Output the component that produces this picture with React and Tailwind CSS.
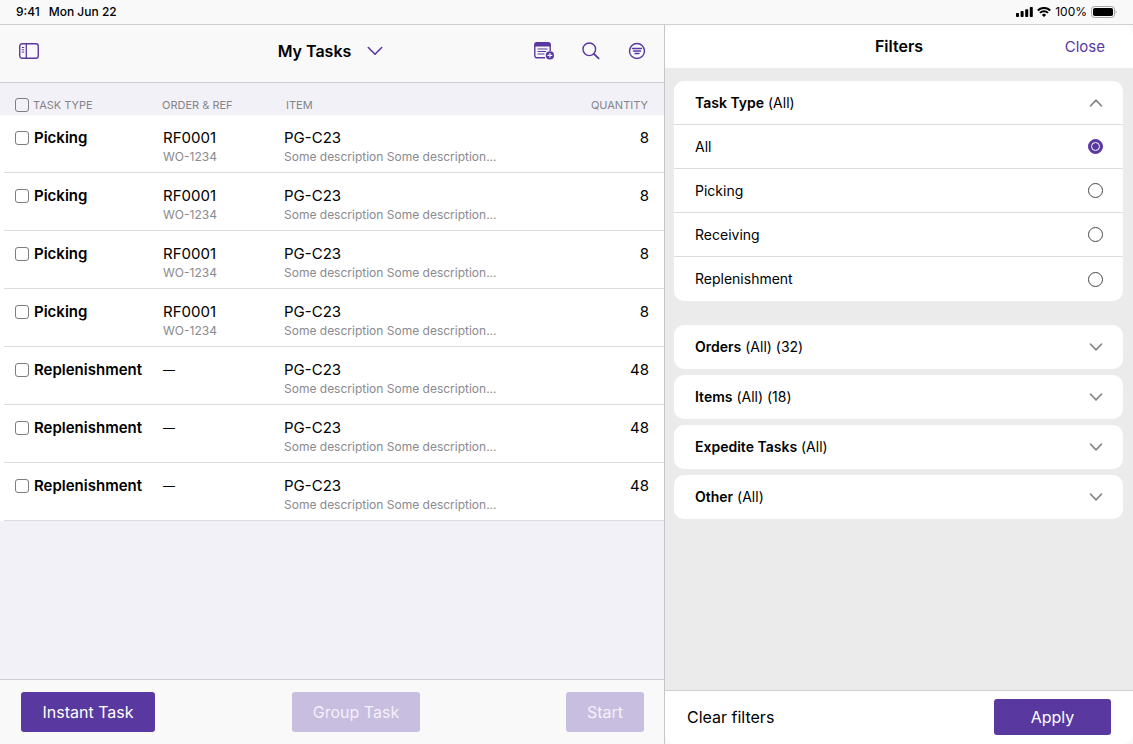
import { useState } from "react";

const initialTasks = [
  { id: 1, type: "Picking", order: "RF0001", ref: "WO-1234", quantity: 8 },
  { id: 2, type: "Picking", order: "RF0001", ref: "WO-1234", quantity: 8 },
  { id: 3, type: "Picking", order: "RF0001", ref: "WO-1234", quantity: 8 },
  { id: 4, type: "Picking", order: "RF0001", ref: "WO-1234", quantity: 8 },
  { id: 5, type: "Replenishment", quantity: 48 },
  { id: 6, type: "Replenishment", quantity: 48 },
  { id: 7, type: "Replenishment", quantity: 48 },
];

const taskTypes = ["All", "Picking", "Receiving", "Replenishment"];

const filterGroups = [
  { name: "Orders", detail: "(All) (32)" },
  { name: "Items", detail: "(All) (18)" },
  { name: "Expedite Tasks", detail: "(All)" },
  { name: "Other", detail: "(All)" },
];

function SidebarIcon() {
  return (
    <svg width="20" height="16" viewBox="0 0 20 16" fill="none" stroke="currentColor" aria-hidden="true">
      <rect x="0.75" y="0.75" width="18.5" height="14.5" rx="2.2" strokeWidth="1.4" />
      <path d="M7.3 1v14" strokeWidth="1.3" />
      <path d="M2.8 4.5h2.4M2.8 6.8h2.4M2.8 9.1h2.4" strokeWidth="1" />
    </svg>
  );
}

function AddTaskIcon() {
  return (
    <svg width="20" height="18" viewBox="0 0 20 18" fill="none" stroke="currentColor" aria-hidden="true">
      <path d="M11 15.8H3A2.2 2.2 0 0 1 .8 13.6V3A2.2 2.2 0 0 1 3 .8h11A2.2 2.2 0 0 1 16.2 3v6" strokeWidth="1.4" />
      <path d="M.8 4V3A2.2 2.2 0 0 1 3 .8h11A2.2 2.2 0 0 1 16.2 3v1z" fill="currentColor" />
      <path d="M3.5 7h10M3.5 9.5h8.5M3.5 12h7" strokeWidth="1.2" />
      <circle cx="15.9" cy="13.4" r="4.1" fill="currentColor" stroke="none" />
      <path d="M15.9 11v4.8M13.5 13.4h4.800" stroke="#f9f9f9" strokeWidth="1.1" />
    </svg>
  );
}

function SearchIcon() {
  return (
    <svg width="18" height="18" viewBox="0 0 18 18" fill="none" stroke="currentColor" aria-hidden="true">
      <circle cx="7.3" cy="7.3" r="6.3" strokeWidth="1.4" />
      <path d="M11.9 11.9l4.700 4.500" strokeWidth="1.9" strokeLinecap="round" />
    </svg>
  );
}

function FilterIcon() {
  return (
    <svg width="18" height="18" viewBox="0 0 18 18" fill="none" stroke="currentColor" aria-hidden="true">
      <circle cx="9" cy="9" r="7.5" strokeWidth="1.4" />
      <path d="M4.500 6.500h9M5.500 9h7M7 11.500h4" strokeWidth="1.4" strokeLinecap="round" />
    </svg>
  );
}

function Chevron({ up = false }) {
  return (
    <svg width="14" height="8" viewBox="0 0 14 8" fill="none" stroke="#8a8a8e" strokeWidth="1.7" strokeLinecap="round" strokeLinejoin="round" aria-hidden="true">
      <path d={up ? "M1.500 6.800L7 1.200l5.500 5.600" : "M1.500 1.200L7 6.800l5.500-5.600"} />
    </svg>
  );
}

function StatusBar() {
  return (
    <header className="flex h-[25px] shrink-0 items-center justify-between border-b border-[#cfcfd3] px-4 text-xs font-medium">
      <div className="flex gap-[9px]">
        <span>9:41</span>
        <span>Mon Jun 22</span>
      </div>
      <div className="flex items-center gap-1">
        <svg width="17" height="10" viewBox="0 0 17 10" aria-hidden="true">
          <rect x="0" y="6" width="3" height="4" rx="0.8" />
          <rect x="4.6" y="4" width="3" height="6" rx="0.8" />
          <rect x="9.2" y="2.2" width="3" height="7.8" rx="0.8" />
          <rect x="13.8" y="0" width="3" height="10" rx="0.8" />
        </svg>
        <svg width="14" height="10" viewBox="0 0 14 10" fill="none" stroke="black" aria-hidden="true">
          <path d="M.8 3.500a8.800 8.800 0 0 1 12.400 0M3 5.900a5.700 5.700 0 0 1 8 0" strokeWidth="2" />
          <path d="M7 10L4.900 7.900a3 3 0 0 1 4.200 0z" fill="black" stroke="none" />
        </svg>
        <span className="font-normal">100%</span>
        <svg width="26" height="12" viewBox="0 0 26 12" aria-hidden="true">
          <rect x="0.5" y="0.5" width="23" height="11" rx="3" fill="none" stroke="#a5a5a5" />
          <rect x="2" y="2" width="20" height="8" rx="1.8" />
          <path d="M24.600 4.200c1.300.6 1.300 3 0 3.600z" fill="#a5a5a5" />
        </svg>
      </div>
    </header>
  );
}

const checkboxStyle =
  "block size-3.5 shrink-0 appearance-none rounded-[3px] border-[1.5px] border-[#7d7d82] bg-transparent checked:border-[#59389f] checked:bg-[#59389f]";

const cellStyle = "h-[58px] bg-white py-0 pt-3 align-top shadow-[inset_0_-1px_0_#dcdcde]";

function TaskTable() {
  const [selected, setSelected] = useState([]);
  const toggle = (id) =>
    setSelected((ids) => (ids.includes(id) ? ids.filter((x) => x !== id) : [...ids, id]));
  const allSelected = selected.length === initialTasks.length;

  return (
    <table className="w-full table-fixed border-separate border-spacing-0 text-left">
      <colgroup>
        <col className="w-[162px]" />
        <col className="w-[122px]" />
        <col />
        <col className="w-[100px]" />
      </colgroup>
      <thead>
        <tr className="h-8 align-bottom text-[11px] leading-5 text-[#85858a]">
          <th scope="col" className="pl-[15px] font-normal">
            <label className="flex items-center gap-1">
              <input
                type="checkbox"
                className={checkboxStyle}
                checked={allSelected}
                onChange={() => setSelected(allSelected ? [] : initialTasks.map((t) => t.id))}
              />
              TASK TYPE
            </label>
          </th>
          <th scope="col" className="font-normal">ORDER &amp; REF</th>
          <th scope="col" className="pl-0.5 font-normal">ITEM</th>
          <th scope="col" className="pr-4 text-right font-normal">QUANTITY</th>
        </tr>
      </thead>
      <tbody className="text-[15px] leading-[22px]">
        {initialTasks.map((task) => (
          <tr key={task.id}>
            <td className={`${cellStyle} border-l-4 border-l-white pl-[11px]`}>
              <label className="flex items-center gap-[5px] font-semibold">
                <input
                  type="checkbox"
                  className={checkboxStyle}
                  checked={selected.includes(task.id)}
                  onChange={() => toggle(task.id)}
                />
                {task.type}
              </label>
            </td>
            <td className={`${cellStyle} pl-px`}>
              {task.order ? (
                <>
                  <div>{task.order}</div>
                  <div className="text-xs text-[#8a8a8e]">{task.ref}</div>
                </>
              ) : (
                <div className="text-xs leading-[22px]">—</div>
              )}
            </td>
            <td className={cellStyle}>
              <div>PG-C23</div>
              <div className="truncate text-xs text-[#8a8a8e]">Some description Some description...</div>
            </td>
            <td className={`${cellStyle} pr-[15px] text-right`}>{task.quantity}</td>
          </tr>
        ))}
      </tbody>
    </table>
  );
}

function TasksPane() {
  return (
    <main className="flex min-w-0 flex-1 flex-col bg-[#f2f1f7]">
      <div className="grid h-[58px] shrink-0 grid-cols-3 items-center border-b border-[#cfcfd3] bg-[#f9f9f9] pr-[18px] pb-[5px] pl-[19px] text-[#59389f]">
        <button type="button" aria-label="Toggle sidebar" className="justify-self-start">
          <SidebarIcon />
        </button>
        <button type="button" className="mr-1 flex items-center gap-4 justify-self-center">
          <h1 className="text-base font-semibold text-black">My Tasks</h1>
          <svg width="16" height="10" viewBox="0 0 16 10" fill="none" stroke="currentColor" strokeWidth="1.6" strokeLinecap="round" strokeLinejoin="round" aria-hidden="true">
            <path d="M1.300 1.500L8 8.300l6.700-6.800" />
          </svg>
        </button>
        <div className="flex items-center gap-7 justify-self-end">
          <button type="button" aria-label="Add task">
            <AddTaskIcon />
          </button>
          <button type="button" aria-label="Search">
            <SearchIcon />
          </button>
          <button type="button" aria-label="Filter">
            <FilterIcon />
          </button>
        </div>
      </div>
      <div className="min-h-0 flex-1 overflow-auto">
        <TaskTable />
      </div>
      <footer className="flex h-[65px] shrink-0 items-center justify-between border-t border-[#cfcfd3] bg-[#f9f9f9] pr-5 pl-[21px] text-base text-white">
        <button type="button" className="h-10 w-[134px] rounded-[3px] bg-[#59389f]">Instant Task</button>
        <button type="button" disabled className="mr-[9px] h-10 w-32 rounded-[3px] bg-[#c8bedf] text-[#f4f1fa]">Group Task</button>
        <button type="button" disabled className="h-10 w-[78px] rounded-[3px] bg-[#c8bedf] text-[#f4f1fa]">Start</button>
      </footer>
    </main>
  );
}

function FiltersPane() {
  const [type, setType] = useState("All");

  return (
    <aside className="flex w-[469px] shrink-0 flex-col border-l border-[#c6c6ca] bg-[#f9f9f9]">
      <div className="grid h-[43px] shrink-0 grid-cols-3 items-baseline rounded-t-[10px] bg-white px-7 pt-[9px]">
        <h2 className="col-start-2 justify-self-center text-base font-semibold">Filters</h2>
        <button type="button" className="justify-self-end text-[15px] text-[#59389f]">Close</button>
      </div>
      <div className="min-h-0 flex-1 overflow-auto bg-[#ebebeb] py-[13px] pr-2.5 pl-[9px] text-sm">
        <section className="overflow-hidden rounded-[10px] bg-white">
          <button type="button" aria-expanded="true" className="flex h-11 w-full items-center justify-between border-b border-[#dcdcde] pr-5 pl-[21px]">
            <span>
              <span className="font-semibold">Task Type</span> (All)
            </span>
            <Chevron up />
          </button>
          <div role="radiogroup" aria-label="Task Type">
            {taskTypes.map((option) => (
              <label key={option} className="flex h-11 items-center justify-between border-b border-[#dcdcde] pr-5 pl-[21px] last:border-b-0">
                {option}
                <span className="grid size-[15px] place-items-center">
                  <input
                    type="radio"
                    name="task-type"
                    value={option}
                    checked={type === option}
                    onChange={() => setType(option)}
                    className="peer col-start-1 row-start-1 size-[15px] appearance-none rounded-full border border-[#48484a] checked:border-[#59389f] checked:bg-[#59389f]"
                  />
                  <span className="pointer-events-none col-start-1 row-start-1 hidden size-[9px] rounded-full border border-white peer-checked:block" />
                </span>
              </label>
            ))}
          </div>
        </section>
        <div className="mt-6 flex flex-col gap-1.5">
          {filterGroups.map((group) => (
            <button key={group.name} type="button" aria-expanded="false" className="flex h-11 items-center justify-between rounded-[10px] bg-white pr-5 pl-[21px]">
              <span>
                <span className="font-semibold">{group.name}</span> {group.detail}
              </span>
              <Chevron />
            </button>
          ))}
        </div>
      </div>
      <div className="border-t border-[#cfcfd3]">
        <footer className="flex items-center justify-between rounded-b-[10px] bg-white px-[22px] pt-2 pb-[9px] text-base">
          <button type="button">Clear filters</button>
          <button type="button" className="h-9 w-[117px] rounded-[3px] bg-[#59389f] text-white">Apply</button>
        </footer>
      </div>
    </aside>
  );
}

export default function App() {
  return (
    <div className="flex h-screen flex-col bg-[#f9f9f9] font-[Inter,sans-serif] text-black">
      <StatusBar />
      <div className="flex min-h-0 flex-1">
        <TasksPane />
        <FiltersPane />
      </div>
    </div>
  );
}
